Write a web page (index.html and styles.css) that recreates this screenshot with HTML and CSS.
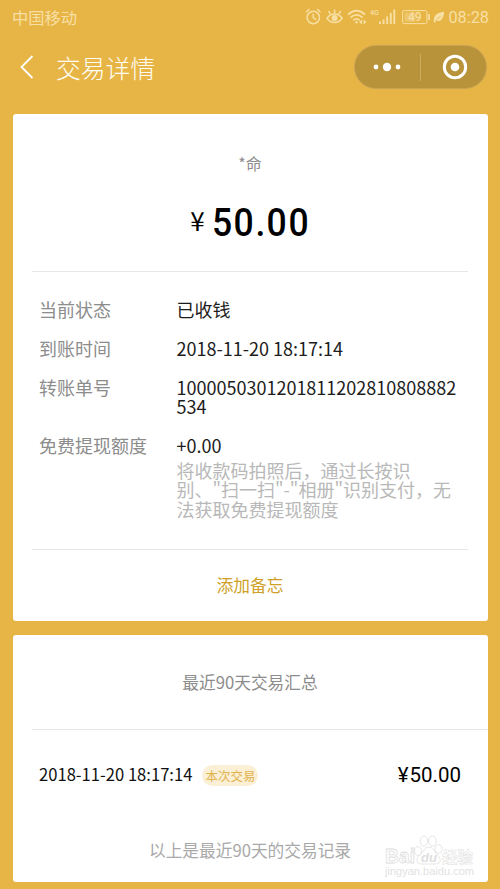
FILE: index.html
```html
<!DOCTYPE html>
<html lang="zh-CN">
<head>
<meta charset="utf-8">
<title>交易详情</title>
<link rel="stylesheet" href="styles.css">
</head>
<body>
<div class="status">
  <span>中国移动</span>
  <div class="status-right">
    <svg width="97" height="20" viewBox="0 0 97 20" fill="none" stroke="currentColor" stroke-width="1.5">
      <circle cx="8.3" cy="10.5" r="6.2"/><path d="M8.3 6.8v4l3 1.8M1.2 5.2 4.4 2M12.2 2l3.2 3.2"/>
      <path d="M22 11.2c4-5.6 11.200-5.600 15.200 0c-4 5.600-11.200 5.600-15.200 0Z"/><circle cx="29.600" cy="11" r="2.200" fill="currentColor"/><path d="M29.600 6.500V2.500M25.500 7.200 23.500 4M33.700 7.200l2-3.200"/>
      <path d="M43 7.600Q51.500-.3 60 7.600M45.500 10.500q6-5.200 12 0M48.300 13.300q3.200-2.700 6.400 0" stroke-width="1.700"/><circle cx="51.500" cy="15.300" r="1.200" fill="currentColor" stroke="none"/>
      <path d="M57 12.500v5l-3-2.500zM58.500 12.500v5l3-2.500z" fill="currentColor" stroke="none"/>
      <path d="M75 17v-2.500M78.600 17v-4.500M82.200 17V9.500M85.800 17V6M89.300 17V2.500" stroke-width="1.900"/>
      <text x="65" y="8.300" class="net" textLength="9" lengthAdjust="spacingAndGlyphs">4G</text>
    </svg>
    <svg width="43" height="20" viewBox="0 0 43 20" fill="none" stroke="currentColor">
      <rect x=".6" y="3.600" width="24.300" height="13" rx="1.500"/><rect x="2.500" y="5.500" width="11" height="9.200" fill="currentColor" fill-opacity=".4" stroke="none"/><path d="M27 7v6" stroke-width="1.700"/>
      <text x="6" y="14.200" class="level">49</text>
      <path d="M32 15.500c-1-7 3-10 10-10.800c0 6-3 10.800-8 9l-1.200 2.300Z" fill="currentColor" stroke="none"/><path d="m33.500 14 5-5" stroke="#e7b546" stroke-width=".8"/>
    </svg>
    <span class="clock">08:28</span>
  </div>
</div>
<header class="nav">
  <svg class="back" width="14" height="24" viewBox="0 0 14 24" fill="none" stroke="#fff" stroke-width="1.800"><path d="M12.500 1 1.500 12l11 11"/></svg>
  <h1>交易详情</h1>
  <div class="capsule">
    <svg width="28" height="10" viewBox="0 0 28 10" fill="#fff"><circle cx="3" cy="5" r="2.400"/><circle cx="14" cy="5" r="4.200"/><circle cx="25" cy="5" r="2.400"/></svg>
    <i></i>
    <svg width="26" height="26" viewBox="0 0 26 26" fill="none" stroke="#fff" stroke-width="3"><circle cx="13" cy="13" r="10.700"/><circle cx="13" cy="13" r="4.300" fill="#fff" stroke="none"/></svg>
  </div>
</header>
<main>
  <section class="card receipt">
    <div class="summary">
      <div class="payer">*命</div>
      <div class="amount"><span class="yen">¥</span><svg width="98" height="48" viewBox="0 0 98 48"><text y="37.500" x="0 23.900 48.300 60.500 85" class="sum" transform="scale(.9 1)">50.00</text></svg></div>
    </div>
    <dl class="details">
      <dt>当前状态</dt><dd>已收钱</dd>
      <dt>到账时间</dt><dd>2018-11-20 18:17:14</dd>
      <dt>转账单号</dt><dd>1000050301201811202810808882<br>534</dd>
      <dt>免费提现额度</dt><dd>+0.00<p>将收款码拍照后，通过长按识<br>别、"扫一扫"-"相册"识别支付，无<br>法获取免费提现额度</p></dd>
    </dl>
    <div class="memo">添加备忘</div>
  </section>
  <section class="card history">
    <h2>最近90天交易汇总</h2>
    <div class="record">
      <time>2018-11-20 18:17:14</time>
      <span class="tag">本次交易</span>
      <span class="price"><span>¥</span>50.00</span>
    </div>
    <div class="end">以上是最近90天的交易记录</div>
    <div class="watermark">
      <svg width="92" height="50" viewBox="0 0 92 50">
        <g class="outline"><ellipse cx="34" cy="19" rx="3.500" ry="4.300"/><ellipse cx="40" cy="9" rx="3.800" ry="5"/><ellipse cx="48.500" cy="9" rx="3.800" ry="5"/><ellipse cx="54.500" cy="17" rx="3.500" ry="4.300"/><path d="M44.500 15c5 0 6 5 9 8s5 9-2 9H38c-7 0-6-6-2-9s4-8 8.500-8Z"/></g>
        <text x="1" y="31" class="brand" textLength="30" lengthAdjust="spacingAndGlyphs">Bai</text>
        <text x="37" y="29.500" class="du">du</text>
        <text x="58" y="31" class="jy" textLength="31" lengthAdjust="spacingAndGlyphs">经验</text>
        <text x="1" y="43" class="url" textLength="89" lengthAdjust="spacingAndGlyphs">jingyan.baidu.com</text>
      </svg>
    </div>
  </section>
</main>
</body>
</html>
```
FILE: styles.css
```css
* { box-sizing: border-box; margin: 0; padding: 0; }
body {
  height: 889px;
  overflow: hidden;
  background: #e7b546;
  font-family: "Noto Sans CJK SC", sans-serif;
  font-weight: 400;
}
.status {
  display: flex;
  justify-content: space-between;
  align-items: center;
  height: 34px;
  padding: 0 11px 0 12px;
  color: #f8dfa3;
  font-size: 16.300px;
  line-height: 24px;
}
.status > span { margin-top: -1px; }
.status-right { display: flex; align-items: center; }
.status-right svg { flex: none; }
.clock { margin-left: 3px; font: 400 16.300px Roboto, sans-serif; }
.net { font: 500 8px Roboto, sans-serif; fill: currentColor; stroke: none; }
.level { font: 500 12px Roboto, sans-serif; fill: currentColor; stroke: none; }
.nav {
  display: flex;
  align-items: center;
  height: 66px;
  padding: 0 13px 0 20px;
}
.nav h1 {
  margin-left: 22px;
  color: #fffdf3;
  font-size: 24.800px;
  font-weight: 300;
  line-height: 36px;
}
.capsule {
  display: flex;
  align-items: center;
  width: 133px;
  height: 44px;
  margin-left: auto;
  padding: 0 18px;
  border: 1px solid #c9a355;
  border-radius: 22px;
  background: #b9933a;
}
.capsule i { width: 1px; height: 27px; margin: 0 21px 0 19px; background: #cbac65; }
.capsule svg { flex: none; }
main { display: grid; gap: 14px; padding: 14px 12.500px 0; }
.card { border-radius: 3px; background: #fff; }
.receipt { height: 507px; padding: 0 19.500px; }
.summary { height: 158px; padding-top: 37px; border-bottom: 1px solid #e6e6e6; text-align: center; }
.payer { color: #8c8c8c; font-size: 16px; line-height: 24px; }
.amount {
  display: flex;
  justify-content: center;
  align-items: flex-start;
  margin-top: 24px;
  color: #000;
}
.yen { margin: -3px 7px 0 0; font: 400 26px/48px "Noto Sans CJK SC", sans-serif; }
.sum { font: 500 39.500px Roboto, sans-serif; }
.details {
  display: grid;
  grid-template-columns: 137.500px 1fr;
  row-gap: 19.500px;
  height: 278px;
  padding: 27.500px 0 0 7px;
  border-bottom: 1px solid #e6e6e6;
  align-content: start;
  font-size: 18px;
  line-height: 19.500px;
  white-space: nowrap;
}
.details dt { color: #8c8c8c; }
.details dd { color: #1c1c1c; }
.details p { margin-top: 5px; color: #b8b8b8; }
.memo { padding-top: 22px; color: #cf9f27; font-size: 16.700px; line-height: 26px; text-align: center; }
.history { position: relative; height: 247px; }
.history h2 {
  height: 95px;
  margin-left: 19.500px;
  padding: 34px 19.500px 0 0;
  border-bottom: 1px solid #e6e6e6;
  color: #8c8c8c;
  font-size: 16.700px;
  font-weight: 400;
  line-height: 26px;
  text-align: center;
}
.record { display: flex; align-items: center; height: 90px; padding: 0 26.500px; color: #111; }
.record time { margin-top: -2px; font-size: 16.600px; }
.tag {
  margin-left: 10px;
  padding: 0 3px;
  border-radius: 11px;
  background: #fbf0d6;
  color: #e1b34c;
  font-size: 12.500px;
  line-height: 21px;
}
.price { margin-left: auto; font: 400 20.500px Roboto, sans-serif; color: #000; }
.price span { margin-right: 1px; }
.end { margin-top: 17px; color: #a9a9a9; font-size: 16.700px; line-height: 26px; text-align: center; }
.watermark { position: absolute; right: 12px; bottom: 0; }
.watermark svg { display: block; }
.outline, .brand, .jy { fill: #fff; stroke: #dedede; stroke-width: .8; }
.brand { font: 700 20px "Liberation Sans", sans-serif; }
.du { font: italic 700 13px "Liberation Sans", sans-serif; fill: #dedede; }
.jy { font: 700 16px "Noto Sans CJK SC", sans-serif; stroke-width: .5; }
.url { font: 400 11px "Liberation Sans", sans-serif; fill: #e2e2e2; }
```
